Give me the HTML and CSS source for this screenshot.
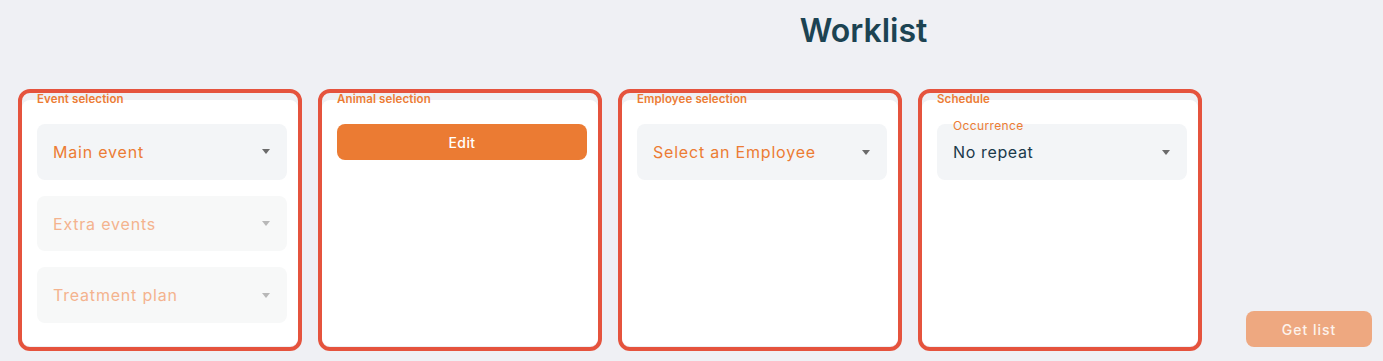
FILE: index.html
```html
<!DOCTYPE html>
<html lang="en">
<head>
    <meta charset="UTF-8">
    <meta name="viewport" content="width=device-width, initial-scale=1.0">
    <title>Worklist</title>
    <link rel="stylesheet" href="styles.css">
</head>
<body>
    <header class="page-header">
        <h1>Worklist</h1>
    </header>

    <main class="worklist">
        <section class="panel">
            <span class="panel-title">Event selection</span>
            <div class="panel-body">
                <div class="select">
                    <span class="select-value">Main event</span>
                    <span class="select-arrow"></span>
                </div>
                <div class="select disabled">
                    <span class="select-value">Extra events</span>
                    <span class="select-arrow"></span>
                </div>
                <div class="select disabled">
                    <span class="select-value">Treatment plan</span>
                    <span class="select-arrow"></span>
                </div>
            </div>
        </section>

        <section class="panel">
            <span class="panel-title">Animal selection</span>
            <div class="panel-body">
                <button type="button" class="btn-edit">Edit</button>
            </div>
        </section>

        <section class="panel">
            <span class="panel-title">Employee selection</span>
            <div class="panel-body">
                <div class="select">
                    <span class="select-value">Select an Employee</span>
                    <span class="select-arrow"></span>
                </div>
            </div>
        </section>

        <section class="panel">
            <span class="panel-title">Schedule</span>
            <div class="panel-body">
                <div class="select">
                    <span class="select-label">Occurrence</span>
                    <span class="select-value filled">No repeat</span>
                    <span class="select-arrow"></span>
                </div>
            </div>
        </section>

        <button type="button" class="btn-get-list" disabled>Get list</button>
    </main>
</body>
</html>
```

FILE: styles.css
```css
body {
    margin: 0;
    font-family: Inter, "Noto Sans", sans-serif;
    background-color: #eff0f4;
    height: 100vh;
}

.page-header {
    padding: 7px 0 0 344px;
    text-align: center;
}

h1 {
    margin: 0;
    font-size: 32px;
    line-height: 48px;
    font-weight: 600;
    color: #1c4352;
}

.worklist {
    display: flex;
    gap: 16px;
    padding: 0 11px 0 18px;
    margin-top: 34px;
}

.panel {
    position: relative;
    width: 276px;
    border: 4px solid #e5533d;
    border-radius: 12px;
    padding: 7px 0 1px;
}

.panel-title {
    position: absolute;
    top: 0;
    left: 15px;
    font-size: 11.5px;
    line-height: 13px;
    font-weight: 600;
    letter-spacing: 0.01em;
    color: #ec7c34;
}

.panel-body {
    display: flex;
    flex-direction: column;
    gap: 16px;
    height: 246px;
    box-sizing: border-box;
    padding: 24px 11px 23px 15px;
    background-color: #fff;
    border-radius: 8px;
}

.select {
    position: relative;
    display: flex;
    align-items: center;
    justify-content: space-between;
    height: 56px;
    padding: 0 17px 0 16px;
    background-color: #f3f5f7;
    border-radius: 8px;
}

.select-value {
    font-size: 16px;
    color: #ec7c34;
    letter-spacing: 0.05em;
}

.select-value.filled {
    color: #1b3a4b;
    letter-spacing: 0.04em;
}

.select-label {
    position: absolute;
    top: -5px;
    left: 16px;
    font-size: 12px;
    line-height: 14px;
    letter-spacing: 0.03em;
    color: #ec7c34;
}

.select-arrow {
    width: 0;
    height: 0;
    border-left: 4.5px solid transparent;
    border-right: 4.5px solid transparent;
    border-top: 5px solid #6b6b6b;
}

.select.disabled {
    background-color: #f7f8f8;
}

.select.disabled .select-value {
    color: #f4b38e;
}

.select.disabled .select-arrow {
    border-top-color: #b8b8b8;
}

button {
    font-family: inherit;
    border: none;
    border-radius: 8px;
    height: 36px;
    font-size: 14px;
    font-weight: 500;
    color: #fff;
    cursor: pointer;
}

.btn-edit {
    width: 100%;
    background-color: #eb7b33;
    letter-spacing: 0.03em;
}

.btn-get-list {
    align-self: flex-end;
    margin: 0 0 4px auto;
    width: 126px;
    background-color: #eea880;
    color: #fdf3ec;
    letter-spacing: 0.07em;
    cursor: default;
}
```
